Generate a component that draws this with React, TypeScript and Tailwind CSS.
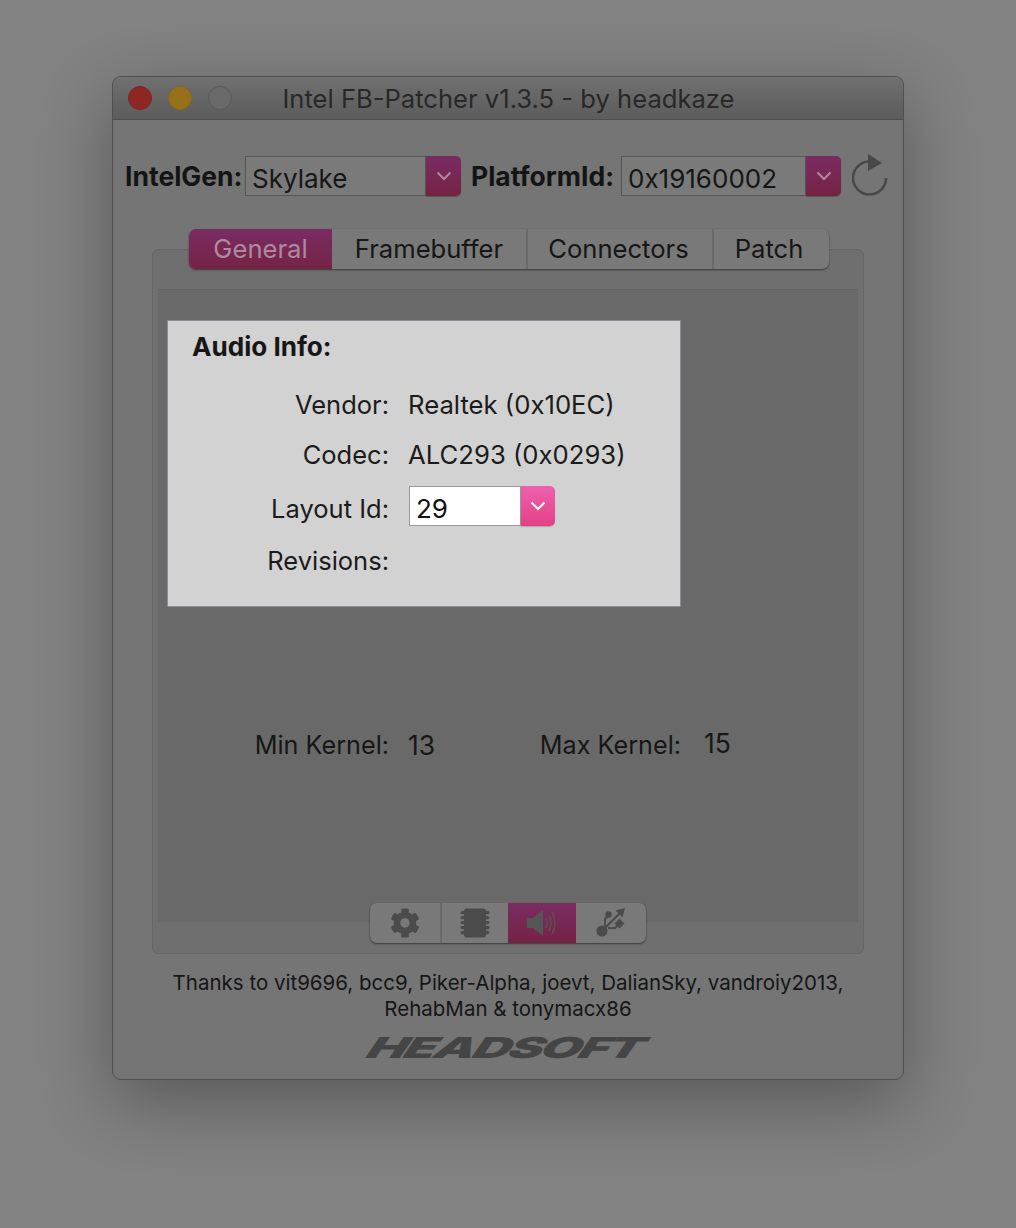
import { FaCog } from 'react-icons/fa';

const font = { fontFamily: 'Inter, "Liberation Sans", sans-serif' };

function DimSelect({ value, width, chevron }: { value: string; width: string; chevron: string }) {
  return (
    <div className={`flex h-10 ${width}`}>
      <div className="flex-1 h-10 border border-[#565656] bg-[#7a7a7a] pl-[6px] text-[26px] leading-[44px] text-[#161616]">
        {value}
      </div>
      <div className="w-[35px] h-10 flex items-center justify-center rounded-r-[5px] bg-gradient-to-b from-[#7a2c63] to-[#752243] shadow-[0_1px_1px_rgba(0,0,0,0.25)]">
        <Chevron color={chevron} />
      </div>
    </div>
  );
}

function Chevron({ color }: { color: string }) {
  return (
    <svg width="16" height="10" viewBox="0 0 16 10" fill="none">
      <path d="M1.5 1.5 L8 8 L14.5 1.5" stroke={color} strokeWidth="2" />
    </svg>
  );
}

function InfoRow({
  label,
  h,
  labelClass = '',
  children,
}: {
  label: string;
  h: string;
  labelClass?: string;
  children?: React.ReactNode;
}) {
  return (
    <div className={`flex items-center ${h}`}>
      <div className={`w-[221px] text-right text-[25.5px] text-[#1b1b1b] ${labelClass}`}>{label}</div>
      <div className="ml-[19px] text-[25.7px] text-[#1b1b1b]">{children}</div>
    </div>
  );
}

function ChipIcon() {
  return (
    <svg width="30" height="30" viewBox="0 0 30 30" fill="#4b4b4b">
      <rect x="4" y="0.5" width="22" height="29" rx="3" />
      <rect x="0.5" y="3" width="29" height="3.2" rx="1.6" />
      <rect x="0.5" y="8" width="29" height="3.2" rx="1.6" />
      <rect x="0.5" y="13" width="29" height="3.2" rx="1.6" />
      <rect x="0.5" y="18" width="29" height="3.2" rx="1.6" />
      <rect x="0.5" y="23" width="29" height="3.2" rx="1.6" />
    </svg>
  );
}

function SpeakerIcon() {
  return (
    <svg width="30" height="26" viewBox="0 0 30 26" fill="none">
      <path d="M0 8 H6 L16 0 V26 L6 18 H0 Z" fill="#555555" />
      <path d="M19 8 Q21.5 13 19 18" stroke="#555555" strokeWidth="1.4" />
      <path d="M22 5 Q26 13 22 21" stroke="#555555" strokeWidth="1.4" />
      <path d="M25 2 Q31 13 25 24" stroke="#555555" strokeWidth="1.4" />
    </svg>
  );
}

function UsbIcon() {
  return (
    <svg width="30" height="30" viewBox="0 0 30 30" fill="#4b4b4b">
      <circle cx="6" cy="23" r="5.6" />
      <path d="M6 23 L24 5" stroke="#4b4b4b" strokeWidth="2.2" />
      <path d="M29 0 L26.5 9.5 L19.5 2.5 Z" />
      <path d="M9 20 L9 11 L12 8" stroke="#4b4b4b" strokeWidth="2" fill="none" />
      <circle cx="12.5" cy="6.5" r="3.2" />
      <path d="M12 20 H19 L22 17" stroke="#4b4b4b" strokeWidth="2" fill="none" />
      <path d="M23.5 10.5 L28.5 15.5 L23.5 20.5 L18.5 15.5 Z" />
    </svg>
  );
}

function RefreshIcon() {
  return (
    <svg width="36" height="42" viewBox="0 0 36 42" fill="none">
      <path d="M17.5 7.5 A16.5 16.5 0 1 0 34 24" stroke="#484848" strokeWidth="2.6" />
      <path d="M16 0 L30 9 L16 17 Z" fill="#484848" />
    </svg>
  );
}

export default function App() {
  return (
    <div className="w-[1016px] h-[1228px] bg-[#828282] pt-[76px] pl-[112px] overflow-hidden" style={font}>
      <div className="w-[792px] h-[1004px] rounded-[9px] bg-[#757575] border border-[#505050] overflow-hidden shadow-[0_22px_70px_rgba(0,0,0,0.32)] flex flex-col">
        {/* title bar */}
        <div className="relative h-[43px] shrink-0 flex items-center justify-center pt-[2px] bg-gradient-to-b from-[#707070] to-[#5c5c5c] border-b border-[#4f4f4f]">
          <div className="absolute left-[15px] top-[9px] flex gap-4">
            <span className="w-6 h-6 rounded-full bg-[#8d2723] border border-[#7f2320]" />
            <span className="w-6 h-6 rounded-full bg-[#97701a] border border-[#8a6617]" />
            <span className="w-6 h-6 rounded-full bg-[#6a6a6a] border border-[#5a5a5a]" />
          </div>
          <span className="text-[25.6px] text-[#282828] ml-[1px]">Intel FB-Patcher v1.3.5 - by headkaze</span>
        </div>

        {/* platform selectors */}
        <div className="flex items-center h-10 mt-[36px] ml-[12px]">
          <span className="pt-[2px] text-[26.5px] font-bold text-[#141414] w-[120px] whitespace-nowrap">IntelGen:</span>
          <DimSelect value="Skylake" width="w-[216px]" chevron="#b087a0" />
          <span className="pt-[2px] ml-[10px] text-[26.5px] font-bold text-[#141414] w-[150px] whitespace-nowrap">PlatformId:</span>
          <DimSelect value="0x19160002" width="w-[220px]" chevron="#b087a0" />
          <div className="ml-[11px] -mt-[2px]">
            <RefreshIcon />
          </div>
        </div>

        {/* tab panel */}
        <div className="mt-[53px] ml-[39px] w-[712px] h-[705px] rounded-[6px] bg-[#6f6f6f] border border-[#666666]">
          <div className="-mt-[21px] ml-[36px] w-[640px] h-10 flex rounded-[7px] bg-[#797979] shadow-[0_1px_2px_rgba(0,0,0,0.5)] text-[25.6px] text-[#161616] leading-10">
            <div className="w-[143px] text-center rounded-l-[7px] bg-gradient-to-b from-[#7a2c63] to-[#752243] text-[#ad8aa2]">General</div>
            <div className="w-[196px] text-center border-r-2 border-[#6a6a6a]">Framebuffer</div>
            <div className="w-[186px] pr-[3px] text-center border-r-2 border-[#6a6a6a]">Connectors</div>
            <div className="flex-1 pr-[5px] text-center">Patch</div>
          </div>

          <div className="mt-[20px] ml-[5px] w-[700px] h-[633px] bg-[#696969] border-t border-[#626262] flex flex-col">
            {/* audio info */}
            <div className="mt-[30px] ml-[9px] w-[514px] h-[287px] bg-[#d2d2d2] border border-[#8d8d9a] flex flex-col">
              <div className="pl-[24px] pt-[6px] h-[58px] text-[26.1px] font-bold text-[#171717]">Audio Info:</div>
              <InfoRow label="Vendor:" h="h-[52px]">Realtek (0x10EC)</InfoRow>
              <InfoRow label="Codec:" h="h-[48px]">ALC293 (0x0293)</InfoRow>
              <InfoRow label="Layout Id:" h="h-[58px]" labelClass="pt-[2px]">
                <div className="flex h-10 w-[146px] ml-[1px] -mt-[4px]">
                  <div className="flex-1 border border-[#9a9a9a] bg-white pl-[6px] text-[26px] leading-[44px] text-[#111111]">29</div>
                  <div className="w-[34px] flex items-center justify-center rounded-r-[5px] bg-gradient-to-b from-[#ee60ae] to-[#e34086] shadow-[0_1px_1px_rgba(0,0,0,0.2)]">
                    <Chevron color="#ffffff" />
                  </div>
                </div>
              </InfoRow>
              <InfoRow label="Revisions:" h="h-[46px]" labelClass="pt-[2px]" />
            </div>

            {/* kernel range */}
            <div className="mt-[123px] flex items-center h-8 text-[25.2px] text-[#171717]">
              <span className="w-[231px] text-right">Min Kernel:</span>
              <span className="ml-[19px] w-[100px] text-[26.5px]">13</span>
              <span className="w-[173px] text-right">Max Kernel:</span>
              <span className="ml-[23px] -mt-[4px] text-[26.5px]">15</span>
            </div>
          </div>

          {/* section switcher */}
          <div className="-mt-[19px] ml-[217px] w-[276px] h-10 flex items-center rounded-[7px] bg-[#797979] shadow-[0_1px_2px_rgba(0,0,0,0.5)]">
            <div className="w-[72px] h-10 flex items-center justify-center border-r-2 border-[#6a6a6a] text-[#4b4b4b] text-[30px]">
              <FaCog />
            </div>
            <div className="w-[66px] h-10 flex items-center justify-center">
              <ChipIcon />
            </div>
            <div className="w-[68px] h-10 flex items-center justify-center bg-gradient-to-b from-[#7a2c63] to-[#752243]">
              <SpeakerIcon />
            </div>
            <div className="flex-1 h-10 flex items-center justify-center">
              <UsbIcon />
            </div>
          </div>
        </div>

        {/* credits */}
        <div className="mt-[16px] text-center text-[20.5px] leading-[26px] text-[#161616]">
          <div>Thanks to vit9696, bcc9, Piker-Alpha, joevt, DalianSky, vandroiy2013,</div>
          <div>RehabMan &amp; tonymacx86</div>
        </div>
        <div className="mt-[11px] pr-[6px] text-center text-[29px] leading-[30px] font-black italic text-[#454545]">
          <span className="inline-block scale-x-[1.81] -skew-x-12 tracking-tighter">HEADSOFT</span>
        </div>
      </div>
    </div>
  );
}
